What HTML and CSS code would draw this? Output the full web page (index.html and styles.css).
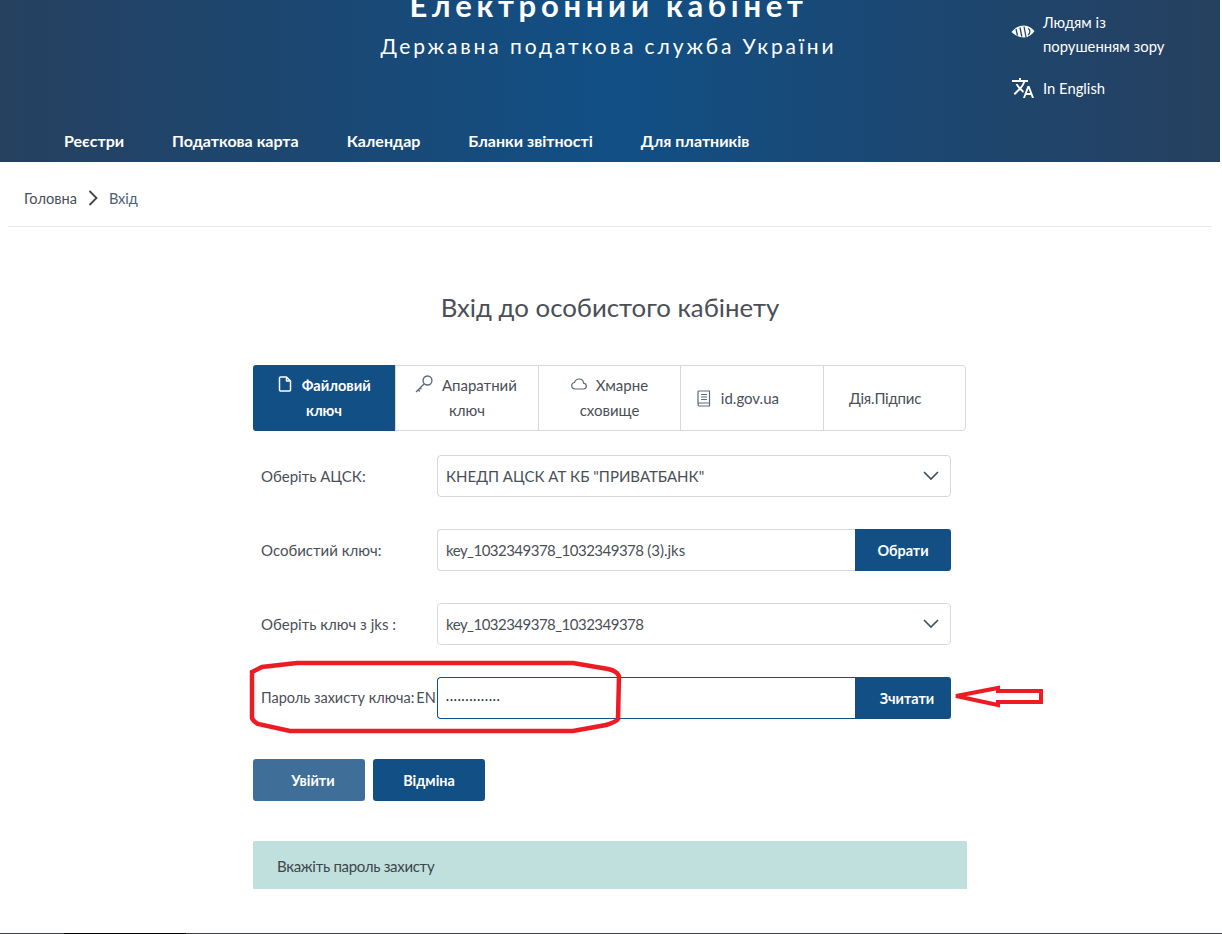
FILE: index.html
```html
<!DOCTYPE html>
<html lang="uk">
<head>
  <meta charset="UTF-8">
  <meta name="viewport" content="width=device-width, initial-scale=1.0">
  <title>Електронний кабінет</title>
  <link rel="stylesheet" href="styles.css">
</head>
<body>
  <header class="site-header">
    <div class="header-top">
      <div class="brand">
        <div class="brand-title">Електронний кабінет</div>
        <div class="brand-sub">Державна податкова служба України</div>
      </div>
      <div class="header-links">
        <a class="header-link">
          <svg class="eye-icon" viewBox="0 0 24 13"><path d="M0.500 7C5 2 9 .5 13 .5c4.500 0 8 2.500 10.500 5.500-2.500 3.500-6 6.500-10.500 6.500-4 0-9-2-12.500-5.500z" fill="#fff"/><path d="M5 4l1.500 6.500M9 2.500l1.800 9M13 1.500l2 10.500M17 3.500c2.500 1 2.500 5 0 6.500" stroke="#1f4669" stroke-width="1.300" fill="none"/></svg>
          <span>Людям із<br>порушенням зору</span>
        </a>
        <a class="header-link">
          <svg class="lang-icon" viewBox="0 0 24 24"><path fill="#fff" d="M12.870 15.070l-2.540-2.510.03-.03c1.740-1.940 2.980-4.170 3.710-6.530H17V4h-7V2H8v2H1v1.990h11.170C11.500 7.920 10.440 9.750 9 11.350 8.070 10.320 7.300 9.190 6.690 8h-2c.73 1.630 1.730 3.170 2.980 4.560l-5.090 5.020L4 19l5-5 3.110 3.110.76-2.040zM18.500 10h-2L12 22h2l1.120-3h4.750L21 22h2l-4.500-12zm-2.620 7l1.620-4.330L19.120 17h-3.240z"/></svg>
          <span>In English</span>
        </a>
      </div>
    </div>
    <nav class="main-nav">
      <a>Реєстри</a>
      <a>Податкова карта</a>
      <a>Календар</a>
      <a>Бланки звітності</a>
      <a>Для платників</a>
    </nav>
  </header>

  <div class="breadcrumb">
    <a>Головна</a>
    <svg class="crumb-sep" viewBox="0 0 10 16"><path d="M1.500 1l7 7-7 7" fill="none" stroke="#444" stroke-width="1.800"/></svg>
    <a class="crumb-link">Вхід</a>
  </div>

  <main class="login">
    <h1>Вхід до особистого кабінету</h1>

    <div class="tabs">
      <div class="tab active">
        <div>
          <svg class="tab-icon" viewBox="0 0 14 16"><path d="M2.500 1h6l4 4v9a1 1 0 0 1-1 1h-9a1 1 0 0 1-1-1V2a1 1 0 0 1 1-1zM8.500 1v4h4" fill="none" stroke="#fff" stroke-width="1.500" stroke-linejoin="round"/></svg>
          Файловий<br>ключ
        </div>
      </div>
      <div class="tab">
        <div>
          <svg class="tab-icon key" viewBox="0 0 17 17"><circle cx="11.800" cy="5.200" r="4.200" fill="none" stroke="#5d6b78" stroke-width="1.300"/><path d="M8.500 8.500L1 16M3 14l1.500 1.500M4.800 12.200L6 13.400" fill="none" stroke="#5d6b78" stroke-width="1.300"/></svg>
          Апаратний<br>ключ
        </div>
      </div>
      <div class="tab">
        <div>
          <svg class="tab-icon" viewBox="0 0 16 12"><path d="M4 11C2 11 .7 9.500.7 7.800.7 6 2 4.700 3.500 4.500 4.200 2.300 6 1 8 1c2.500 0 4.400 1.800 4.600 4.100 1.500.2 2.700 1.300 2.700 2.900S14 11 12.300 11z" fill="none" stroke="#5d6b78" stroke-width="1.200"/></svg>
          Хмарне<br>сховище
        </div>
      </div>
      <div class="tab tab-shifted">
        <div>
          <svg class="tab-icon book" viewBox="0 0 14 17"><path d="M1 14V1.800C1 1.300 1.300 1 1.800 1h10.700v15H2.500C1.700 16 1 15.300 1 14.500s.7-1.500 1.500-1.500h10M4 4.500h6M4 7h6M4 9.500h6" fill="none" stroke="#5d6b78" stroke-width="1.200"/></svg>
          id.gov.ua
        </div>
      </div>
      <div class="tab tab-shifted"><div>Дія.Підпис</div></div>
    </div>

    <form class="login-form">
      <div class="form-row">
        <label>Оберіть АЦСК:</label>
        <div class="control select">КНЕДП АЦСК АТ КБ "ПРИВАТБАНК"
          <svg class="chevron" viewBox="0 0 16 9"><path d="M1 1l7 7 7-7" fill="none" stroke="#3f5060" stroke-width="1.700"/></svg>
        </div>
      </div>
      <div class="form-row">
        <label>Особистий ключ:</label>
        <div class="control joined"><span class="key-name">key_1032349378_1032349378</span> (3).jks</div>
        <button type="button" class="btn btn-side">Обрати</button>
      </div>
      <div class="form-row">
        <label>Оберіть ключ з jks :</label>
        <div class="control select"><span class="key-name">key_1032349378_1032349378</span>
          <svg class="chevron" viewBox="0 0 16 9"><path d="M1 1l7 7 7-7" fill="none" stroke="#3f5060" stroke-width="1.700"/></svg>
        </div>
      </div>
      <div class="form-row">
        <label class="label-pass">Пароль захисту ключа:<span class="lang-mark">EN</span></label>
        <div class="control joined focused"><span class="dots">••••••••••••••</span></div>
        <button type="button" class="btn btn-side btn-read">Зчитати</button>
      </div>

      <!-- red marks drawn on top of the screenshot -->
      <svg class="marks" viewBox="0 0 800 90">
        <path d="M3 13L13 8 48 4H324L359 10Q368 12 370 17L369 60Q367 63 357 66L324 72H41L9 65Q4 62 3 59z" fill="none" stroke="#ed1c24" stroke-width="4.500"/>
        <path d="M707 37L749 29V32H792V43H749V46z" fill="#fff" stroke="#ed1c24" stroke-width="4"/>
      </svg>
    </form>

    <div class="actions">
      <button type="button" class="btn btn-muted">Увійти</button>
      <button type="button" class="btn">Відміна</button>
    </div>

    <div class="notice">Вкажіть пароль захисту</div>
  </main>

  <div class="bottom-line"></div>
</body>
</html>
```

FILE: styles.css
```css
body {
  margin: 0;
  width: 1222px;
  height: 934px;
  overflow: hidden;
  display: flex;
  flex-direction: column;
  background-color: #fff;
  color: #4a4f57;
  font-family: Lato, "Noto Sans", sans-serif;
  font-size: 15px;
}
.site-header {
  width: 1220px;
  height: 162px;
  box-sizing: border-box;
  overflow: hidden;
  flex-shrink: 0;
  color: #fff;
  background: linear-gradient(90deg, #26405f 0%, #114f85 50%, #26405f 100%);
}
.header-top {
  display: flex;
  height: 119px;
}
.brand {
  width: 1011px;
  padding-left: 206px;
  box-sizing: border-box;
  text-align: center;
}
.brand-title {
  margin-top: -13px;
  font-size: 31px;
  font-weight: 700;
  line-height: 36px;
  letter-spacing: 4.7px;
}
.brand-sub {
  margin-top: 8px;
  font-size: 21px;
  line-height: 30px;
  letter-spacing: 2.9px;
}
.header-links {
  display: flex;
  flex-direction: column;
  gap: 18px;
  padding-top: 10px;
}
.header-link {
  display: flex;
  align-items: center;
  gap: 8px;
  font-size: 14.8px;
  line-height: 24px;
}
.eye-icon {
  width: 24px;
  height: 13px;
  flex-shrink: 0;
  margin-bottom: 6px;
}
.lang-icon {
  width: 24px;
  height: 24px;
  flex-shrink: 0;
}
.main-nav {
  display: flex;
  gap: 48px;
  padding-left: 64px;
  font-size: 16px;
  font-weight: 700;
  line-height: 44px;
}
.breadcrumb {
  display: flex;
  align-items: center;
  gap: 11px;
  height: 56px;
  margin: 0 10px 0 8px;
  padding: 8px 0 0 16px;
  border-bottom: 1px solid #e6e8ea;
  font-size: 14.6px;
}
.crumb-sep {
  width: 10px;
  height: 16px;
}
.crumb-link {
  color: #4a6076;
}
.login {
  width: 714px;
  margin-left: 253px;
}
.login h1 {
  margin: 63px 0 41px;
  font-size: 25.8px;
  font-weight: 400;
  line-height: 34px;
  text-align: center;
  color: #4a4f57;
}
.tabs {
  display: grid;
  grid-template-columns: 141px 143px 142px 143px 142px;
  width: 713px;
  height: 66px;
  box-sizing: border-box;
  border: 1px solid #d5d9dd;
  border-radius: 4px;
}
.tab {
  display: flex;
  align-items: center;
  justify-content: center;
  text-align: center;
  line-height: 25px;
  border-left: 1px solid #d5d9dd;
}
.tab.active {
  margin: -1px 0 -1px -1px;
  border-left: none;
  border-radius: 3px 0 0 3px;
  background-color: #114f85;
  color: #fff;
  font-weight: 700;
  font-size: 14.6px;
}
.tab-shifted {
  justify-content: flex-start;
}
.tab-shifted > div {
  padding-left: 15px;
  white-space: nowrap;
}
.tab-shifted:last-child > div {
  padding-left: 25px;
  letter-spacing: -0.2px;
}
.tab-icon {
  width: 16px;
  height: 16px;
  margin-right: 5px;
  vertical-align: -1px;
}
.tab-icon.key {
  width: 18px;
  height: 18px;
  vertical-align: -2px;
  margin-left: -2px;
}
.tab-icon.book {
  height: 17px;
  vertical-align: -3px;
  margin-right: 5px;
}
.login-form {
  position: relative;
  margin-top: 24px;
  display: flex;
  flex-direction: column;
  gap: 32px;
}
.form-row {
  display: flex;
  width: 698px;
  height: 42px;
  align-items: stretch;
}
.form-row label {
  width: 184px;
  flex-shrink: 0;
  padding-left: 8px;
  box-sizing: border-box;
  line-height: 42px;
}
.form-row .label-pass {
  font-size: 14.5px;
  white-space: nowrap;
}
.lang-mark {
  margin-left: 2px;
}
.control {
  flex: 1;
  position: relative;
  box-sizing: border-box;
  padding-left: 8px;
  border: 1px solid #d5d9dd;
  border-radius: 4px;
  line-height: 40px;
}
.control.joined {
  border-top-right-radius: 0;
  border-bottom-right-radius: 0;
  border-right: none;
}
.control.focused {
  border-color: #114f85;
}
.key-name {
  letter-spacing: -0.52px;
}
.dots {
  font-size: 5px;
  letter-spacing: 1px;
  color: #2f3a46;
  vertical-align: 2px;
}
.chevron {
  position: absolute;
  right: 11px;
  top: 15px;
  width: 16px;
  height: 9px;
}
.btn {
  width: 112px;
  height: 42px;
  padding: 0;
  border: none;
  border-radius: 3px;
  background-color: #114f85;
  color: #fff;
  font-family: inherit;
  font-size: 14.4px;
  font-weight: 700;
}
.btn-side {
  width: 96px;
  border-top-left-radius: 0;
  border-bottom-left-radius: 0;
}
.btn-read {
  padding-left: 8px;
}
.btn-muted {
  padding-left: 8px;
  background-color: #3f6f99;
}
.marks {
  position: absolute;
  left: -4px;
  top: 204px;
  width: 800px;
  height: 90px;
  pointer-events: none;
}
.actions {
  display: flex;
  gap: 8px;
  margin-top: 40px;
}
.notice {
  margin-top: 40px;
  height: 48px;
  padding-left: 24px;
  border-radius: 2px 2px 0 0;
  background-color: #c0e0dd;
  line-height: 50px;
  letter-spacing: -0.3px;
  color: #3f454c;
}
.bottom-line {
  margin-top: auto;
  height: 1px;
  background: linear-gradient(90deg, #3c4248 64px, #000 64px, #000 186px, #3c4248 186px);
}
```
